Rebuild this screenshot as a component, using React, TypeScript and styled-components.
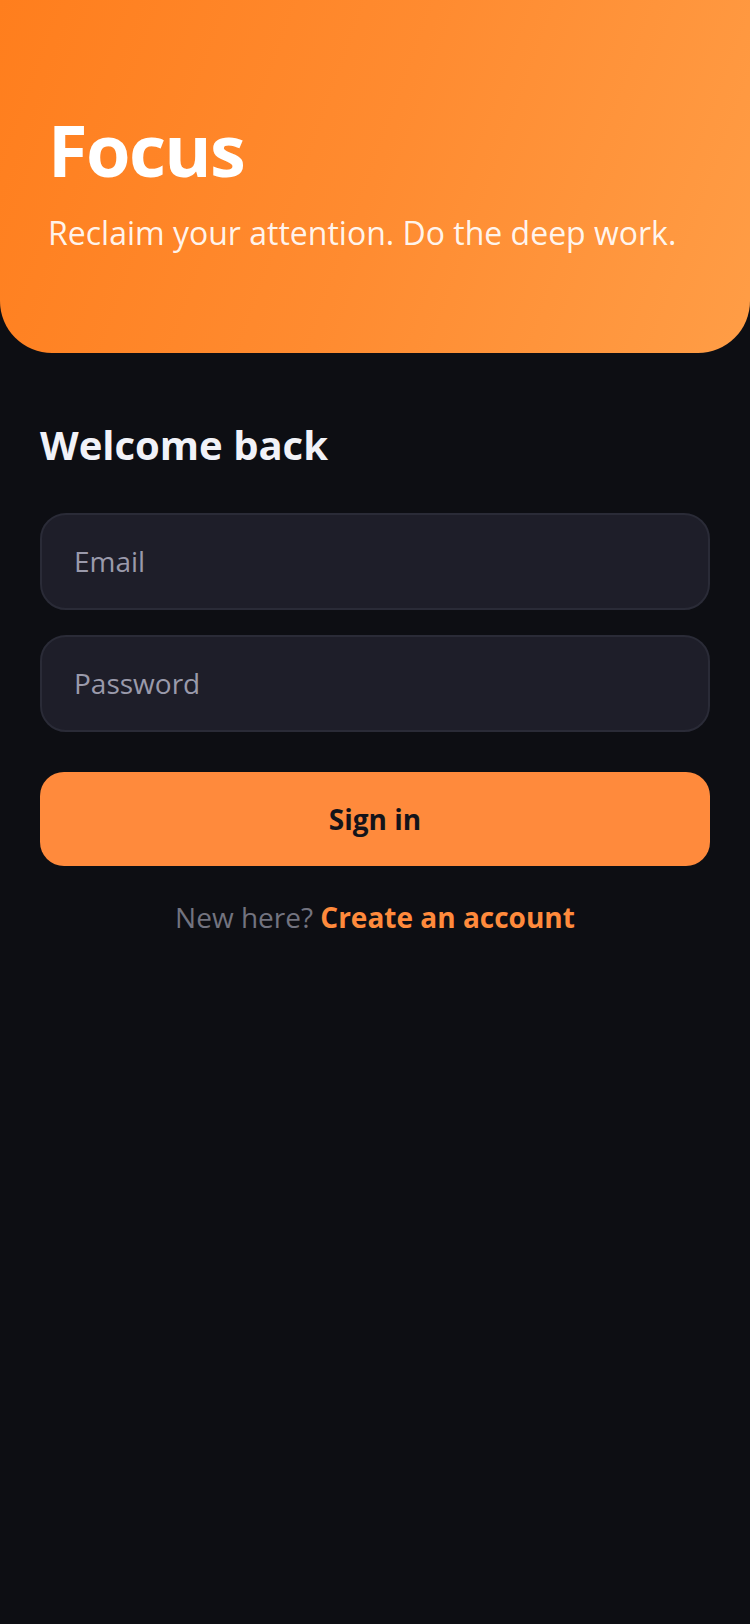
import React from 'react';
import styled, { createGlobalStyle } from 'styled-components';

const GlobalStyle = createGlobalStyle`
    html, body {
        margin: 0;
        padding: 0;
        background: #0d0e13;
    }

    * {
        box-sizing: border-box;
    }

    body {
        font-family: 'Open Sans', 'Noto Sans', sans-serif;
        -webkit-font-smoothing: antialiased;
    }
`;

export default function App() {
    return (
        <>
            <GlobalStyle />
            <Page>
                <Hero>
                    <Title>Focus</Title>
                    <Tagline>Reclaim your attention. Do the deep work.</Tagline>
                </Hero>

                <Form onSubmit={(e) => e.preventDefault()}>
                    <Heading>Welcome back</Heading>

                    <Fields>
                        <Field type="email" placeholder="Email" />
                        <Field type="password" placeholder="Password" />
                    </Fields>

                    <SubmitButton type="submit">Sign in</SubmitButton>

                    <Footnote>
                        New here? <FootLink href="#">Create an account</FootLink>
                    </Footnote>
                </Form>
            </Page>
        </>
    );
}

const Page = styled.div`
    min-height: 1624px;
    background: #0d0e13;
    display: flex;
    flex-direction: column;
`;

const Hero = styled.header`
    background: linear-gradient(110deg, #ff7e1d 0%, #ff8b30 50%, #ff9d46 100%);
    border-radius: 0 0 52px 52px;
    padding: 110px 48px 97px 48px;
    display: flex;
    flex-direction: column;
`;

const Title = styled.h1`
    margin: 0;
    font-size: 72px;
    line-height: 1.1;
    font-weight: 700;
    letter-spacing: -1.6px;
    color: #ffffff;
`;

const Tagline = styled.p`
    margin: 22px 0 0 0;
    font-size: 32px;
    line-height: 1.4;
    font-weight: 400;
    color: rgba(255, 255, 255, 0.92);
`;

const Form = styled.form`
    padding: 68px 40px 0 40px;
    display: flex;
    flex-direction: column;
`;

const Heading = styled.h2`
    margin: 0;
    font-size: 40px;
    line-height: 1.2;
    font-weight: 700;
    color: #f1f2f8;
`;

const Fields = styled.div`
    margin-top: 44px;
    display: flex;
    flex-direction: column;
    gap: 25px;
`;

const Field = styled.input`
    width: 100%;
    height: 97px;
    padding: 0 32px;
    border-radius: 26px;
    border: 2px solid #2a2b37;
    background: #1e1e29;
    color: #e8e8f0;
    font-family: inherit;
    font-size: 28px;
    outline: none;

    &::placeholder {
        color: #9a9aab;
    }
`;

const SubmitButton = styled.button`
    margin-top: 40px;
    height: 94px;
    border: none;
    border-radius: 24px;
    background: #ff8a3c;
    color: #14141a;
    font-family: inherit;
    font-size: 28px;
    font-weight: 700;
    cursor: pointer;
`;

const Footnote = styled.p`
    margin: 32px 0 0 0;
    text-align: center;
    font-size: 28px;
    line-height: 1.4;
    color: #72737f;
`;

const FootLink = styled.a`
    color: #ff8a3c;
    font-weight: 700;
    text-decoration: none;
`;
